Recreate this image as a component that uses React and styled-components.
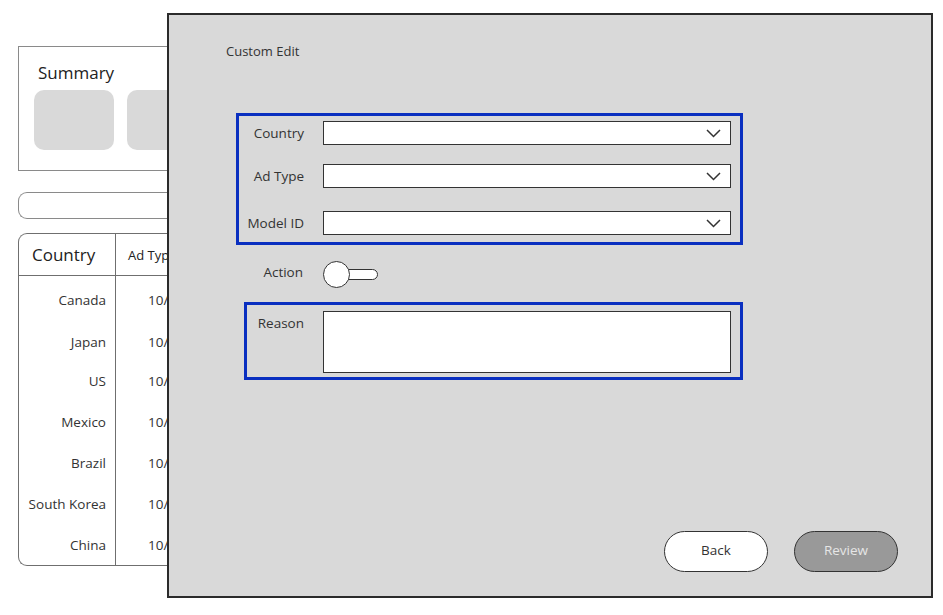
import React from "react";
import styled, { createGlobalStyle } from "styled-components";

const Global = createGlobalStyle`
  html, body { margin: 0; padding: 0; background: #fff; }
  body { font-family: "Open Sans", "Noto Sans", sans-serif; color: #333; }
  * { box-sizing: border-box; }
`;

const Page = styled.div`
  position: relative;
  width: 943px;
  height: 615px;
  overflow: hidden;
  background: #fff;
`;

const Backdrop = styled.div`
  display: flex;
  flex-direction: column;
  padding: 46px 0 0 18px;
  width: 420px;
`;

const SummaryCard = styled.section`
  height: 125px;
  border: 1px solid #8a8a8a;
  border-right: none;
  padding: 14px 0 0 15px;
`;

const CardTitle = styled.div`
  font-size: 17px;
  line-height: 24px;
  color: #222;
  padding-left: 4px;
`;

const Tiles = styled.div`
  display: flex;
  gap: 13px;
  margin-top: 5px;
`;

const Tile = styled.div`
  width: 80px;
  height: 60px;
  border-radius: 10px;
  background: #d9d9d9;
`;

const SearchBar = styled.div`
  margin-top: 21px;
  height: 27px;
  border: 1px solid #8a8a8a;
  border-right: none;
  border-radius: 9px 0 0 9px;
`;

const Table = styled.div`
  margin-top: 14px;
  height: 333px;
  border: 1px solid #6f6f6f;
  border-right: none;
  border-radius: 9px 0 0 9px;
  display: grid;
  grid-template-columns: 97px 1fr;
  grid-template-rows: 42px 1fr;
`;

const HeadCell = styled.div`
  display: flex;
  align-items: center;
  border-bottom: 1px solid #6f6f6f;
  border-right: ${(p) => (p.$divider ? "1px solid #6f6f6f" : "none")};
  padding-left: ${(p) => p.$pad}px;
  font-size: ${(p) => p.$size}px;
  color: #222;
`;

const BodyCol = styled.div`
  display: flex;
  flex-direction: column;
  border-right: ${(p) => (p.$divider ? "1px solid #6f6f6f" : "none")};
`;

const BodyCell = styled.div`
  display: flex;
  align-items: center;
  justify-content: ${(p) => (p.$right ? "flex-end" : "flex-start")};
  padding: ${(p) => (p.$right ? "0 9px 0 0" : "0 0 0 32px")};
  font-size: 13.5px;
  color: #333;
`;

const Modal = styled.div`
  position: absolute;
  left: 167px;
  top: 13px;
  width: 766px;
  height: 585px;
  background: #d9d9d9;
  border: 2px solid #2b2b2b;
  display: flex;
  flex-direction: column;
  padding: 26px 33px 24px 57px;
`;

const ModalTitle = styled.div`
  font-size: 13px;
  line-height: 20px;
  color: #333;
`;

const FieldGroup = styled.div`
  margin-top: ${(p) => p.$top}px;
  margin-left: ${(p) => p.$left}px;
  width: ${(p) => p.$width}px;
  border: 3px solid #0a2fc0;
  padding: ${(p) => p.$pad};
  display: flex;
  flex-direction: column;
`;

const FieldRow = styled.div`
  display: grid;
  grid-template-columns: ${(p) => p.$label}px 408px;
  column-gap: 19px;
  align-items: ${(p) => (p.$top ? "start" : "center")};
  margin-top: ${(p) => p.$mt || 0}px;
`;

const Label = styled.label`
  font-size: 13.5px;
  line-height: 18px;
  color: #333;
  text-align: right;
  white-space: nowrap;
  padding-top: ${(p) => p.$pt || 0}px;
  padding-bottom: ${(p) => p.$pb || 0}px;
`;

const Select = styled.div`
  height: 24px;
  background: #fff;
  border: 1px solid #333;
  display: flex;
  align-items: center;
  justify-content: flex-end;
  padding-right: 9px;
`;

const TextArea = styled.div`
  height: 62px;
  background: #fff;
  border: 1px solid #333;
`;

const ToggleRow = styled.div`
  display: grid;
  grid-template-columns: 77px auto;
  column-gap: 20px;
  align-items: center;
  margin-top: 16px;
`;

const Toggle = styled.div`
  position: relative;
  width: 56px;
  height: 27px;
`;

const Track = styled.div`
  position: absolute;
  left: 18px;
  top: 8px;
  width: 37px;
  height: 11px;
  border: 1px solid #333;
  border-radius: 6px;
  background: #fff;
`;

const Knob = styled.div`
  position: absolute;
  left: 0;
  top: 0;
  width: 27px;
  height: 27px;
  border-radius: 50%;
  border: 1px solid #333;
  background: #fff;
`;

const Footer = styled.div`
  margin-top: auto;
  display: flex;
  justify-content: flex-end;
  gap: 26px;
`;

const Button = styled.button`
  width: 104px;
  height: 41px;
  border-radius: 21px;
  border: 1.5px solid #333;
  background: ${(p) => (p.$primary ? "#999" : "#fff")};
  color: ${(p) => (p.$primary ? "#e6e6e6" : "#333")};
  font-family: "Open Sans", "Noto Sans", sans-serif;
  font-size: 13.5px;
  padding: 0 0 3px;
`;

const Chevron = () => (
  <svg width="15" height="9" viewBox="0 0 15 9" fill="none">
    <path d="M1 1l6.5 6.5L14 1" stroke="#333" strokeWidth="1.5" />
  </svg>
);

const rows = [
  { name: "Canada", h: 47 },
  { name: "Japan", h: 38 },
  { name: "US", h: 40 },
  { name: "Mexico", h: 41 },
  { name: "Brazil", h: 42 },
  { name: "South Korea", h: 40 },
  { name: "China", h: 42 },
];

export default function App() {
  return (
    <Page>
      <Global />
      <Backdrop>
        <SummaryCard>
          <CardTitle>Summary</CardTitle>
          <Tiles>
            <Tile />
            <Tile />
            <Tile />
          </Tiles>
        </SummaryCard>
        <SearchBar />
        <Table>
          <HeadCell $divider $pad={13} $size={17}>Country</HeadCell>
          <HeadCell $pad={12} $size={13}>Ad Type</HeadCell>
          <BodyCol $divider>
            {rows.map((r) => (
              <BodyCell key={r.name} $right style={{ height: r.h }}>
                {r.name}
              </BodyCell>
            ))}
          </BodyCol>
          <BodyCol>
            {rows.map((r) => (
              <BodyCell key={r.name} style={{ height: r.h }}>
                10/01/2023
              </BodyCell>
            ))}
          </BodyCol>
        </Table>
      </Backdrop>

      <Modal>
        <ModalTitle>Custom Edit</ModalTitle>
        <FieldGroup $top={52} $left={10} $width={507} $pad="5px 9px 7px 0">
          <FieldRow $label={65}>
            <Label>Country</Label>
            <Select><Chevron /></Select>
          </FieldRow>
          <FieldRow $label={65} $mt={19}>
            <Label>Ad Type</Label>
            <Select><Chevron /></Select>
          </FieldRow>
          <FieldRow $label={65} $mt={23}>
            <Label>Model ID</Label>
            <Select><Chevron /></Select>
          </FieldRow>
        </FieldGroup>
        <ToggleRow>
          <Label $pb={5}>Action</Label>
          <Toggle>
            <Track />
            <Knob />
          </Toggle>
        </ToggleRow>
        <FieldGroup $top={14} $left={18} $width={499} $pad="6px 9px 4px 0">
          <FieldRow $label={57} $top>
            <Label $pt={3}>Reason</Label>
            <TextArea />
          </FieldRow>
        </FieldGroup>
        <Footer>
          <Button>Back</Button>
          <Button $primary>Review</Button>
        </Footer>
      </Modal>
    </Page>
  );
}
